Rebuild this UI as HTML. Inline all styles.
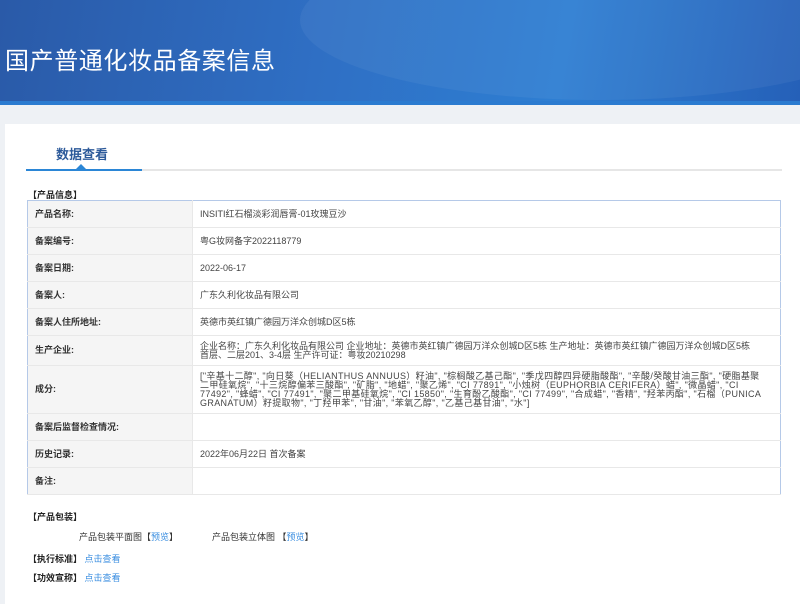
<!DOCTYPE html>
<html><head><meta charset="utf-8"><style>
*{margin:0;padding:0;box-sizing:border-box}
body{width:800px;height:604px;background:#eef1f5;font-family:"Liberation Sans","Noto Sans CJK SC",sans-serif;font-size:9px;color:#333;overflow:hidden;position:relative}
.hd{position:absolute;left:0;top:0;width:800px;height:105px;background:linear-gradient(100deg,#2a5aa8 0%,#2f6fc4 40%,#2e7ed2 70%,#2560b8 100%);overflow:hidden}
.hd .g{position:absolute;left:300px;top:-60px;width:600px;height:160px;border-radius:50%;background:rgba(255,255,255,.05)}
.hd h1{position:absolute;left:5px;top:41px;font-size:24px;font-weight:normal;color:#fff;letter-spacing:0.6px}
.hd .bar{position:absolute;left:0;top:101px;width:800px;height:4px;background:#2b7bd0}
.card{position:absolute;left:5px;top:124px;width:795px;height:480px;background:#fff}
.tab{position:absolute;left:56px;top:144px;font-size:13px;color:#2d5a9a;font-weight:bold}
.line{position:absolute;left:26px;top:169px;width:756px;height:2px;background:#e6e6e6}
.line2{position:absolute;left:26px;top:169px;width:116px;height:2px;background:#2b86d6}
.tri{position:absolute;left:76px;top:164px;width:0;height:0;border-left:5px solid transparent;border-right:5px solid transparent;border-bottom:5px solid #2b86d6}
.sec{position:absolute;left:28px;font-weight:bold;color:#222;font-size:9px}
table{position:absolute;left:27px;top:200px;width:754px;border-collapse:collapse;border:1px solid #b5c9e8}
td{border-bottom:1px solid #e8e8e8;font-size:9px;vertical-align:middle;line-height:9px}
td.l{width:165px;background:#f5f5f5;font-weight:bold;padding-left:7px;border-right:1px solid #e8e8e8;color:#333}
td.v{padding-left:7px;padding-right:14px;color:#444}
td.c{letter-spacing:0.35px}
a{color:#3a8ee0;text-decoration:none}
</style></head><body>
<div class="hd"><div class="g"></div><h1>国产普通化妆品备案信息</h1><div class="bar"></div></div>
<div class="card"></div>
<div class="tab">数据查看</div>
<div class="line"></div><div class="line2"></div><div class="tri"></div>
<div class="sec" style="top:188px">【产品信息】</div>
<table>
<tr style="height:27px"><td class="l">产品名称:</td><td class="v">INSITI红石榴淡彩润唇膏-01玫瑰豆沙</td></tr>
<tr style="height:27px"><td class="l">备案编号:</td><td class="v">粤G妆网备字2022118779</td></tr>
<tr style="height:27px"><td class="l">备案日期:</td><td class="v">2022-06-17</td></tr>
<tr style="height:27px"><td class="l">备案人:</td><td class="v">广东久利化妆品有限公司</td></tr>
<tr style="height:27px"><td class="l">备案人住所地址:</td><td class="v">英德市英红镇广德园万洋众创城D区5栋</td></tr>
<tr style="height:30px"><td class="l">生产企业:</td><td class="v">企业名称：广东久利化妆品有限公司 企业地址：英德市英红镇广德园万洋众创城D区5栋 生产地址：英德市英红镇广德园万洋众创城D区5栋<br>首层、二层201、3-4层 生产许可证：粤妆20210298</td></tr>
<tr style="height:48px"><td class="l">成分:</td><td class="v c">["辛基十二醇", "向日葵（HELIANTHUS ANNUUS）籽油", "棕榈酸乙基己酯", "季戊四醇四异硬脂酸酯", "辛酸/癸酸甘油三酯", "硬脂基聚二甲硅氧烷", "十三烷醇偏苯三酸酯", "矿脂", "地蜡", "聚乙烯", "CI 77891", "小烛树（EUPHORBIA CERIFERA）蜡", "微晶蜡", "CI 77492", "蜂蜡", "CI 77491", "聚二甲基硅氧烷", "CI 15850", "生育酚乙酸酯", "CI 77499", "合成蜡", "香精", "羟苯丙酯", "石榴（PUNICA GRANATUM）籽提取物", "丁羟甲苯", "甘油", "苯氧乙醇", "乙基己基甘油", "水"]</td></tr>
<tr style="height:27px"><td class="l">备案后监督检查情况:</td><td class="v"></td></tr>
<tr style="height:27px"><td class="l">历史记录:</td><td class="v">2022年06月22日 首次备案</td></tr>
<tr style="height:27px"><td class="l">备注:</td><td class="v"></td></tr>
</table>
<div class="sec" style="top:510px">【产品包装】</div>
<div style="position:absolute;left:79px;top:530px">产品包装平面图【<a>预览</a>】</div>
<div style="position:absolute;left:212px;top:530px">产品包装立体图 【<a>预览</a>】</div>
<div class="sec" style="top:552px">【执行标准】 <a style="font-weight:normal">点击查看</a></div>
<div class="sec" style="top:571px">【功效宣称】 <a style="font-weight:normal">点击查看</a></div>
</body></html>
